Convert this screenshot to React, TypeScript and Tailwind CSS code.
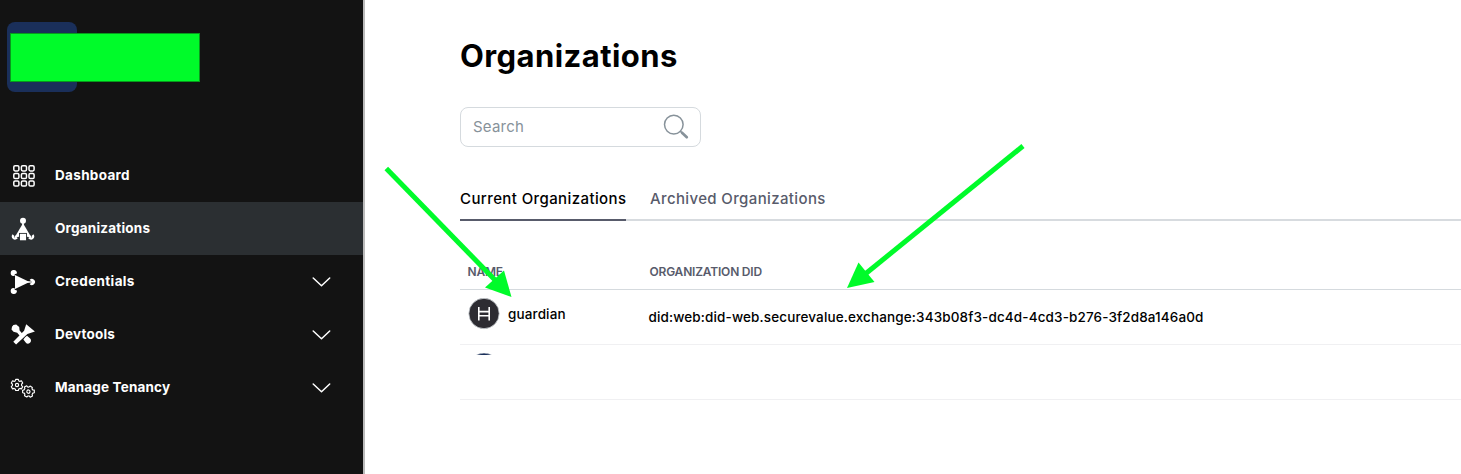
import type { ReactNode } from 'react';

function DashboardIcon() {
  const steps = [2.9, 10.5, 18.1];
  return (
    <svg className="ml-px" width="26" height="26" viewBox="0 0 26 26" fill="none" stroke="#fff" strokeWidth="1.5">
      {steps.map((y) => steps.map((x) => <rect key={`${x}-${y}`} x={x - 0.1} y={y - 0.1} width="5.1" height="5.1" rx="1.3" />))}
    </svg>
  );
}

function OrganizationsIcon() {
  return (
    <svg width="26" height="26" viewBox="0 0 26 26" fill="#fff">
      <circle cx="13" cy="4.7" r="3" />
      <path d="M12.2 6h1.6v3h-1.6z" />
      <path d="M13 7.2 21 20.8H5z" />
      <g fill="none" stroke="#fff" strokeWidth="2.3">
        <path d="M3.4 19a2.1 2.1 0 1 0 3.4 2.4" />
        <path d="M22.6 19a2.1 2.1 0 1 1-3.4 2.4" />
      </g>
      <path d="M4.4 20.2 8 18.2l.8 2L5.4 22zM21.6 20.2 18 18.2l-.8 2 3.4 1.8z" />
      <rect x="9.5" y="17.4" width="7" height="7.4" stroke="#2b2f32" strokeWidth="0.9" />
    </svg>
  );
}

function CredentialsIcon() {
  return (
    <svg width="26" height="26" viewBox="0 0 26 26" fill="#fff">
      <path d="M5 6 19.5 13 5 20z" />
      <path d="M4 1a3 3 0 0 1 2.9 3.5L4.6 5.3 5 6.5 3.4 7A3 3 0 0 1 4 1zM4 25a3 3 0 0 0 2.9-3.5l-2.3-.8.4-1.2-1.6-.5A3 3 0 0 0 4 25z" />
      <path d="M19.6 11.1a3 3 0 1 1 0 3.8l1.8-1.2v-1.4z" />
      <path d="M17 12.3h4.5v1.4H17z" />
    </svg>
  );
}

function DevtoolsIcon() {
  return (
    <svg className="mt-px" width="26" height="26" viewBox="0 0 26 26" fill="#fff">
      <path d="M2 4.8 3.4 3.1 6.2 2.6 9.2 5 9.6 8.6 12.2 11.5 9.7 13.8 7.2 10.8 3.5 9.8 1.5 7.5z" />
      <path d="M16.2 2.2 24.9 9.5 17.4 12 6.1 22.5 3.3 19.8 14.1 8.8z" />
      <path d="m15.1 15.2 1.9-1.4 2.9 2.4a3 3 0 0 1-.2 4.8 3 3 0 0 1-4-.6l-2.3-3z" />
    </svg>
  );
}

const gearPath =
  'M-1.3-5.6h2.6l.5 1.5 1.1.5 1.5-.6 1.3 2.2-1.1 1.1v1.5l1.1 1.1-1.3 2.2-1.5-.5-1.1.6-.5 1.5h-2.6l-.5-1.5-1.1-.6-1.5.5-1.3-2.2 1.1-1.1v-1.5l-1.1-1.1 1.3-2.2 1.5.6 1.1-.5z';

function TenancyIcon() {
  return (
    <svg width="26" height="26" viewBox="0 0 26 26" fill="none" stroke="#fff" strokeWidth="1.15" strokeLinejoin="round">
      <g transform="translate(7 10)">
        <path d={gearPath} />
        <circle r="1.6" />
      </g>
      <g transform="translate(18.4 16.6) rotate(30)">
        <path d={gearPath} />
        <circle r="1.6" />
      </g>
    </svg>
  );
}

function Chevron() {
  return (
    <svg className="mt-px ml-auto" width="20" height="12" viewBox="0 0 20 12" fill="none" stroke="#fff" strokeWidth="1.5" strokeLinecap="round" strokeLinejoin="round">
      <path d="M2.2 2 10.5 9.8 18.7 2" />
    </svg>
  );
}

type NavItem = { label: string; icon: ReactNode; tracking: string; active?: boolean; expandable?: boolean };

const navItems: NavItem[] = [
  { label: 'Dashboard', icon: <DashboardIcon />, tracking: 'tracking-[0.33px]' },
  { label: 'Organizations', icon: <OrganizationsIcon />, tracking: 'tracking-[0.22px]', active: true },
  { label: 'Credentials', icon: <CredentialsIcon />, tracking: 'tracking-[0.36px]', expandable: true },
  { label: 'Devtools', icon: <DevtoolsIcon />, tracking: 'tracking-[0.2px]', expandable: true },
  { label: 'Manage Tenancy', icon: <TenancyIcon />, tracking: 'tracking-[0.17px]', expandable: true },
];

function Sidebar() {
  return (
    <aside className="flex w-[365px] shrink-0 flex-col border-r-2 border-[#bbbbbb] bg-[#131313]">
      <div className="h-[149px] pt-[22px] pl-[7px]">
        <div className="h-[70px] w-[70px] rounded-lg bg-[#1a2f5a] pt-[11px] pl-[3px]">
          <div className="h-[49px] w-[190px] border border-[#079a1c] bg-[#00fb2a]" />
        </div>
      </div>
      <nav>
        {navItems.map((item) => (
          <a key={item.label} className={`flex h-[53px] items-center pr-[32px] ${item.active ? 'bg-[#2b2f32]' : ''}`}>
            <span className="w-[55px] shrink-0 pl-[10px]">{item.icon}</span>
            <span className={`pb-[2px] text-[13.5px] leading-5 font-bold text-white ${item.tracking}`}>{item.label}</span>
            {item.expandable && <Chevron />}
          </a>
        ))}
      </nav>
    </aside>
  );
}

function Arrows() {
  return (
    <svg className="pointer-events-none absolute top-0 left-0" width="1461" height="474" fill="#00fb2a" stroke="#00fb2a">
      <path d="M386.3 168.5 495 280" strokeWidth="5" />
      <path d="M504 270.5 511.5 297 485 287.5z" stroke="none" />
      <path d="M1023 146 864 275" strokeWidth="5" />
      <path d="M858.5 262.5 847 288 874.5 282z" stroke="none" />
    </svg>
  );
}

export default function App() {
  return (
    <div className="relative flex h-[474px] w-[1461px] overflow-hidden bg-white font-[Inter,sans-serif] text-black">
      <Sidebar />
      <main className="min-w-0 flex-1 pt-[36px] pl-[95px]">
        <h1 className="h-[71px] text-[31px] leading-10 font-bold tracking-[0.42px]">Organizations</h1>
        <div className="flex h-10 w-[241px] items-center justify-between rounded-lg border border-[#d5dade] pr-[11px] pl-3">
          <span className="text-[15px] tracking-[0.2px] text-[#87929a]">Search</span>
          <svg width="26" height="26" viewBox="0 0 26 26" fill="none" stroke="#87929a" strokeLinecap="round">
            <circle cx="10.8" cy="10.6" r="9.3" strokeWidth="1.5" />
            <path d="m17.4 17.2 1.5 1.5" strokeWidth="1.5" />
            <path d="m19 18.7 4.8 4.5" strokeWidth="2.7" />
          </svg>
        </div>
        <div className="mt-[31px] flex h-[43px] gap-6 border-b-2 border-[#d7dbdf] text-[15px] leading-[42px] font-medium whitespace-nowrap">
          <div className="h-[43px] w-[166px] border-b-2 border-[#585b6b] tracking-[0.4px]">Current Organizations</div>
          <div className="tracking-[0.37px] text-[#585b6b]">Archived Organizations</div>
        </div>
        <div className="mt-[32px] flex h-[37px] border-b border-[#d5dade] text-[12px] leading-[37px] font-semibold tracking-[-0.2px] text-[#585b6b]">
          <div className="w-[189.5px] pl-[7.5px]">NAME</div>
          <div>ORGANIZATION DID</div>
        </div>
        <div className="flex h-[55px] items-center border-b border-[#f0f0f2] text-[13.5px] font-medium tracking-[0.13px] whitespace-nowrap">
          <div className="flex w-[188.5px] items-center pb-[5px] pl-2">
            <svg className="-mt-px" width="32" height="32" viewBox="0 0 32 32">
              <circle cx="16" cy="15.5" r="15.2" fill="#2d2c32" stroke="#d5dade" strokeWidth="0.8" />
              <path d="M10.8 9v13.4M21.2 9v13.4M10.8 13.6h10.4M10.8 17.8h10.4" stroke="#fff" strokeWidth="1.6" />
            </svg>
            <span className="ml-2">guardian</span>
          </div>
          <span>did:web:did-web.securevalue.exchange:343b08f3-dc4d-4cd3-b276-3f2d8a146a0d</span>
        </div>
        <div className="h-[55px] border-b border-[#f0f0f2] pt-[8px] pl-2">
          <svg width="32" height="2" viewBox="0 0 32 2">
            <circle cx="16" cy="15.5" r="15.4" fill="#1a2f5a" stroke="#d5dade" strokeWidth="0.6" />
          </svg>
        </div>
      </main>
      <Arrows />
    </div>
  );
}
